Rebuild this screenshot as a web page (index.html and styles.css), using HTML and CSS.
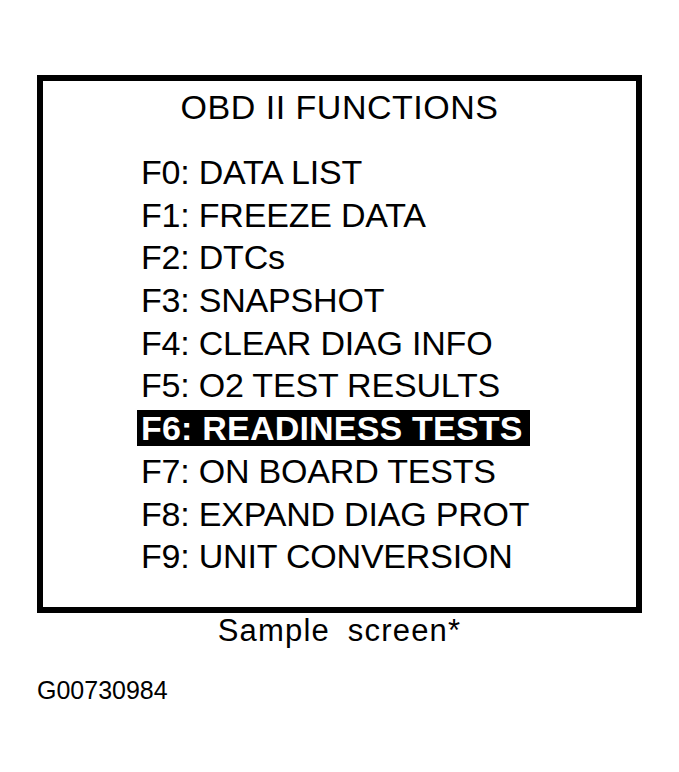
FILE: index.html
```html
<!DOCTYPE html>
<html>
<head>
<meta charset="utf-8">
<link rel="stylesheet" href="styles.css">
</head>
<body>
<div class="figure">
  <div class="screen">
    <div class="title">OBD II FUNCTIONS</div>
    <ul class="menu">
      <li>F0: DATA LIST</li>
      <li>F1: FREEZE DATA</li>
      <li>F2: DTCs</li>
      <li>F3: SNAPSHOT</li>
      <li>F4: CLEAR DIAG INFO</li>
      <li>F5: O2 TEST RESULTS</li>
      <li><span class="selected">F6: READINESS TESTS</span></li>
      <li>F7: ON BOARD TESTS</li>
      <li>F8: EXPAND DIAG PROT</li>
      <li>F9: UNIT CONVERSION</li>
    </ul>
  </div>
  <div class="caption">Sample screen*</div>
</div>
<div class="code">G00730984</div>
</body>
</html>
```
FILE: styles.css
```css
html, body {
  margin: 0;
  padding: 0;
  background: #fff;
  color: #000;
  font-family: "Liberation Sans", Arial, sans-serif;
}
.figure {
  margin-left: 37px;
  padding-top: 75px;
  width: 605px;
}
.screen {
  box-sizing: border-box;
  width: 605px;
  height: 538px;
  border: 6px solid #000;
  padding-top: 5px;
}
.title {
  font-size: 34px;
  line-height: 42px;
  text-align: center;
  letter-spacing: 0.5px;
}
.menu {
  list-style: none;
  margin: 23px 0 0 0;
  padding: 0 0 0 98px;
}
.menu li {
  font-size: 34px;
  line-height: 42.7px;
  height: 42.7px;
  white-space: nowrap;
  letter-spacing: -0.2px;
}
.selected {
  display: inline-block;
  background: #000;
  color: #fff;
  font-weight: bold;
  line-height: 36px;
  margin-left: -4px;
  padding: 0 7px 0 4px;
  letter-spacing: 0.2px;
}
.caption {
  font-size: 31px;
  line-height: 36px;
  text-align: center;
  letter-spacing: 1.2px;
  word-spacing: 8px;
}
.code {
  margin-top: 26px;
  margin-left: 37px;
  font-size: 25px;
  line-height: 30px;
}
```
